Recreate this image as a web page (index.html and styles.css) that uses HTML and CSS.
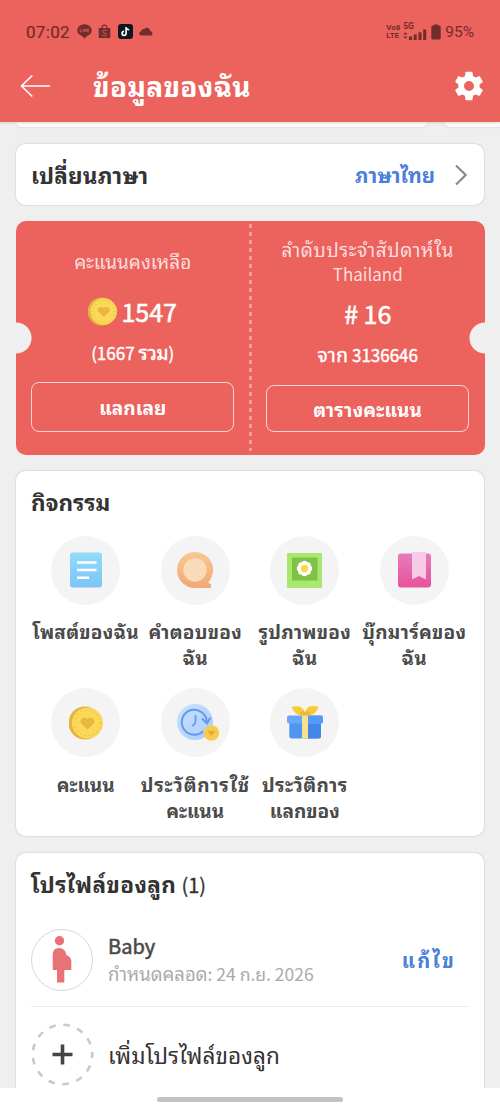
FILE: index.html
```html
<!DOCTYPE html>
<html lang="th">
<head>
<meta charset="utf-8">
<meta name="viewport" content="width=device-width">
<title>ข้อมูลของฉัน</title>
<link rel="stylesheet" href="styles.css">
</head>
<body>
<svg class="defs" width="0" height="0" aria-hidden="true">
  <defs>
    <linearGradient id="blue" x1="0" y1="0" x2="0" y2="1"><stop offset="0" stop-color="#92dbfa"/><stop offset="1" stop-color="#7cc4f6"/></linearGradient>
    <linearGradient id="orange" x1="0" y1="0" x2="0" y2="1"><stop offset="0" stop-color="#f7ca92"/><stop offset="1" stop-color="#f3a773"/></linearGradient>
    <linearGradient id="pink" x1="0" y1="0" x2="0" y2="1"><stop offset="0" stop-color="#e57cbd"/><stop offset="1" stop-color="#e8529b"/></linearGradient>
    <linearGradient id="sky" x1="0" y1="0" x2="1" y2="1"><stop offset="0" stop-color="#c9e2fd"/><stop offset="1" stop-color="#a9cdfa"/></linearGradient>
    <symbol id="coin" viewBox="0 0 34 34">
      <circle cx="16" cy="17" r="16.5" fill="#e3b440"/>
      <circle cx="18.5" cy="17" r="15.5" fill="#fbd857"/>
      <circle cx="18.5" cy="17" r="12.8" fill="none" stroke="#e6b842" stroke-width="1.1" stroke-dasharray="1.2 3.2"/>
      <path d="M18.5 23.500 L12.300 17.400 C9.500 13.500 14.800 9.800 18.500 13 C22.200 9.800 27.500 13.500 24.700 17.400Z" fill="#e9b73f"/>
    </symbol>
  </defs>
</svg>
<div class="screen">
  <header class="top">
    <div class="status">
      <span class="clock">07:02</span>
      <svg class="s-line" width="15" height="15" viewBox="0 0 15 15"><ellipse cx="7.5" cy="6.3" rx="7.2" ry="6.1" fill="#712c2c"/><path d="M4 11 L7.5 14.5 L12 10Z" fill="#712c2c"/><path d="M3.2 4.8V7.8H4.8M6 4.8V7.8M7.3 7.8V4.8L9 7.8V4.8M12 4.8H10.4V7.8H12M10.4 6.3H12" fill="none" stroke="#d65c56" stroke-width=".8"/></svg>
      <svg class="s-shop" width="13" height="15" viewBox="0 0 13 15"><path d="M.7 4H12.3V14H.7Z" fill="#712c2c"/><path d="M4 4C4 .1 9 .1 9 4" fill="none" stroke="#712c2c" stroke-width="1.1"/><path d="M8.6 6.7C6.5 5.2 4.2 6.2 4.7 7.7C5.2 9.3 8.6 8.8 8.5 10.8C8.3 12.5 5.7 12.4 4.2 11.2" fill="none" stroke="#d65c56" stroke-width="1"/></svg>
      <svg class="s-tik" width="15" height="15" viewBox="0 0 15 15"><rect width="15" height="15" rx="3" fill="#101721"/><path d="M8.1 3V9.5A2 2 0 1 1 6.2 7.4M8.1 3C8.3 4.8 9.6 5.7 11.2 5.8" fill="none" stroke="#fff" stroke-width="1.6"/></svg>
      <svg class="s-cloud" width="14" height="9" viewBox="0 0 14 9"><path d="M2.5 8.5C-.4 8.4-.3 5 2.1 4.6C2 2.3 4.5 1.4 5.5 2.2C7-.6 11 .7 11 4C13.9 4.3 14.3 8.2 12 8.5Z" fill="#712c2c"/></svg>
      <span class="volte"><span>Vo8</span><span>LTE</span></span>
      <span class="signal"><span class="g5">5G</span>
        <svg width="24" height="11" viewBox="0 0 24 11"><path d="M.4 5.500 L2.400 3.200 4.400 5.500ZM.4 7.500 L2.400 9.800 4.400 7.500Z" fill="#712c2c"/><path d="M6 7.500h3V11H6zM10.700 5.500h3V11h-3zM15.500 3.200h3V11h-3zM20.200 .6h3V11h-3z" fill="#712c2c"/></svg></span>
      <svg class="s-bat" width="10" height="16" viewBox="0 0 10 16"><path d="M3 .5H7V1.500H8.500Q9.700 1.500 9.700 3V14Q9.700 15.500 8.200 15.500H1.800Q.3 15.500 .3 14V3Q.3 1.500 1.500 1.500H3Z" fill="#712c2c"/></svg>
      <span class="pct">95%</span>
    </div>
    <div class="bar">
      <svg class="back" width="31" height="24" viewBox="0 0 31 24"><path d="M30 12H1.500M12.300 1.500L1.500 12L12.300 22.500" fill="none" stroke="#fff" stroke-width="1.600"/></svg>
      <h1>ข้อมูลของฉัน</h1>
      <svg class="gear" width="34" height="34" viewBox="0 0 24 24"><path fill="#fff" d="M19.430 12.980c.040-.320.070-.640.070-.980s-.030-.660-.070-.980l2.110-1.650c.190-.150.240-.420.120-.640l-2-3.460c-.120-.220-.390-.300-.610-.220l-2.490 1c-.520-.400-1.080-.730-1.690-.980l-.380-2.650C14.460 2.180 14.250 2 14 2h-4c-.250 0-.460.180-.490.420l-.380 2.650c-.610.250-1.170.590-1.690.980l-2.490-1c-.230-.090-.490 0-.610.220l-2 3.460c-.130.220-.070.490.120.640l2.110 1.650c-.040.320-.070.650-.070.980s.030.660.070.980l-2.110 1.650c-.190.150-.240.420-.120.640l2 3.460c.120.220.390.300.610.220l2.490-1c.520.400 1.080.730 1.690.980l.380 2.650c.030.240.240.420.490.420h4c.250 0 .460-.180.490-.420l.380-2.650c.610-.250 1.170-.590 1.690-.980l2.490 1c.230.090.490 0 .610-.220l2-3.460c.120-.220.070-.490-.120-.640l-2.110-1.650zM12 15.500c-1.930 0-3.500-1.570-3.500-3.500s1.570-3.500 3.500-3.500 3.500 1.570 3.500 3.500-1.570 3.500-3.500 3.500z"/></svg>
    </div>
  </header>

  <main>
    <div class="peek"><i></i><i></i></div>

    <section class="card lang">
      <span class="lang-label">เปลี่ยนภาษา</span>
      <span class="lang-value">ภาษาไทย</span>
      <svg width="12" height="22" viewBox="0 0 12 22"><path d="M1 1.500L10.700 11L1 20.500" fill="none" stroke="#84898c" stroke-width="2.100"/></svg>
    </section>

    <section class="ticket">
      <div class="half left">
        <p class="cap one">คะแนนคงเหลือ</p>
        <p class="big"><svg width="29" height="29"><use href="#coin"/></svg><span>1547</span></p>
        <p class="sub">(1667 <span class="t-sum">รวม</span>)</p>
        <a class="btn b1"><span>แลกเลย</span></a>
      </div>
      <div class="half right">
        <p class="cap two"><span class="t-rank">ลำดับประจำสัปดาห์ใน</span><br>Thailand</p>
        <p class="big"><span># 16</span></p>
        <p class="sub"><span class="t-from">จาก</span> 3136646</p>
        <a class="btn b2"><span>ตารางคะแนน</span></a>
      </div>
    </section>

    <section class="card acts">
      <h2>กิจกรรม</h2>
      <div class="grid">
        <div class="act"><div class="disc"><svg width="32" height="36" viewBox="0 0 32 36"><rect y=".5" width="32" height="35" rx="3" fill="url(#blue)"/><path d="M7 10.500H26.500M7 18H26.500M7 25.700H19" stroke="#fff" stroke-width="2.400"/></svg></div>
          <p><span class="a1">โพสต์ของฉัน</span></p></div>
        <div class="act"><div class="disc"><svg width="36" height="36" viewBox="0 0 36 36"><path d="M18 0A18 18 0 0 1 31.500 30Q31 31.500 34 32V36H18A18 18 0 0 1 18 0Z" fill="url(#orange)"/><circle cx="18" cy="18" r="11.700" fill="#fadbb9"/></svg></div>
          <p><span class="a2">คำตอบของ</span><br><span class="ac">ฉัน</span></p></div>
        <div class="act"><div class="disc"><svg width="35" height="35" viewBox="0 0 35 35"><rect width="35" height="35" rx="1" fill="#a8e770"/><rect x="5" y="4.500" width="25.500" height="23" fill="#80c246"/><g fill="#fff"><circle cx="17.500" cy="10.800" r="3"/><circle cx="20.800" cy="12.200" r="3"/><circle cx="22.200" cy="15.500" r="3"/><circle cx="20.800" cy="18.800" r="3"/><circle cx="17.500" cy="20.200" r="3"/><circle cx="14.200" cy="18.800" r="3"/><circle cx="12.800" cy="15.500" r="3"/><circle cx="14.200" cy="12.200" r="3"/></g><circle cx="17.500" cy="15.500" r="3.700" fill="#f3db4b"/></svg></div>
          <p><span class="a3">รูปภาพของ</span><br><span class="ac">ฉัน</span></p></div>
        <div class="act"><div class="disc"><svg width="33" height="36" viewBox="0 0 33 36"><rect y="1.500" width="33" height="34" rx="3" fill="url(#pink)"/><path d="M14 0H28V27.500L21 24L14 27.500Z" fill="#f8cae5"/></svg></div>
          <p><span class="a4">บุ๊กมาร์คของ</span><br><span class="ac">ฉัน</span></p></div>
        <div class="act"><div class="disc"><svg width="34" height="34"><use href="#coin"/></svg></div>
          <p><span class="a5">คะแนน</span></p></div>
        <div class="act"><div class="disc hist"><svg width="43" height="37" viewBox="0 0 43 37"><circle cx="18" cy="18" r="18" fill="url(#sky)"/><path d="M26 27.200A12.500 12.500 0 1 1 29.800 18.500" fill="none" stroke="#6798ec" stroke-width="2"/><path d="M25 14.500L30 19.500L33.500 13.500" fill="none" stroke="#6798ec" stroke-width="2"/><path d="M18.500 11V17Q18.500 20.500 15 22" fill="none" stroke="#6798ec" stroke-width="1.700"/><circle cx="34.500" cy="29" r="7.700" fill="#f8cb50"/><path d="M34.500 32L31.600 29C30.200 26.800 33 25.600 34.500 27.200C36 25.600 38.800 26.800 37.400 29Z" fill="#e6ad35"/></svg></div>
          <p><span class="a6">ประวัติการใช้</span><br><span class="a5">คะแนน</span></p></div>
        <div class="act"><div class="disc"><svg width="36" height="33" viewBox="0 0 36 33"><path d="M17.500 9C14 10 8 9.500 4.500 1C10-1 16 .5 18 6C20-.5 26-1 31.700 1C28.500 9.500 22 10 18.500 9Z" fill="#facb35"/><path d="M12 8C14 4 17 5 18 7C19 5 22 4 24 8L18 10Z" fill="#efb62f"/><rect x="2.300" y="13" width="31.700" height="19.500" rx="2.500" fill="#5195f2"/><path d="M21 17H34V30Q34 32.500 31.500 32.500H21Z" fill="#4487e9"/><rect x="0" y="9.500" width="36" height="8" rx="2" fill="#68a7fb"/><path d="M21 9.500H34Q36 9.500 36 11.500V15.500Q36 17.500 34 17.500H21Z" fill="#5599f7"/><path d="M15 9.500H21V32.500H15Z" fill="#f8e18a"/></svg></div>
          <p><span class="a7">ประวัติการ</span><br><span class="a8">แลกของ</span></p></div>
      </div>
    </section>

    <section class="card kids">
      <h2><span class="k-title">โปรไฟล์ของลูก</span> <small>(1)</small></h2>
      <div class="kid">
        <div class="avatar"><svg width="20" height="47" viewBox="0 0 20 47"><circle cx="7.500" cy="4.800" r="4.700" fill="#e97276"/><path d="M.7 34V19Q.7 12 7 12Q13.500 12 14.300 19Q19.300 20.500 19.300 26V34H12.300V46.500H5V34Z" fill="#e97276"/></svg></div>
        <div class="who"><b>Baby</b><span class="due"><span class="t-due">กำหนดคลอด</span>: 24 <span class="t-mon">ก.ย.</span> 2026</span></div>
        <a class="edit">แก้ไข</a>
      </div>
      <div class="kid add">
        <svg class="dash" width="63" height="63" viewBox="0 0 63 63"><circle cx="31.500" cy="31.500" r="29.700" fill="none" stroke="#c9c9c9" stroke-width="2.600" stroke-dasharray="6.600 7.755" stroke-dashoffset="3"/><path d="M31.500 21.500V41.500M21.500 31.500H41.500" stroke="#444" stroke-width="3.600"/></svg>
        <span class="addt">เพิ่มโปรไฟล์ของลูก</span>
      </div>
    </section>
  </main>
  <footer><i></i></footer>
</div>
</body>
</html>
```
FILE: styles.css
```css
* { box-sizing: border-box; }
body { margin: 0; }
h1, h2, p { margin: 0; }
svg { display: block; flex: none; }
.defs { position: absolute; }
.screen {
  width: 500px; height: 1111px; overflow: hidden;
  display: flex; flex-direction: column;
  background: #efefef; color: #333;
  font-family: "Noto Sans CJK SC", "Noto Sans Thai Looped", "Noto Looped Thai", "Droid Sans Thai", Loma, Laksaman, Umpush, Waree, Garuda, "Noto Serif Thai Looped", "Noto Sans Thai", "Noto Sans", sans-serif;
  white-space: nowrap;
}
.top { height: 122px; flex: none; background: #ec625d; box-shadow: 0 1px 2px rgba(0,0,0,.12); z-index: 1; }
.status {
  height: 63px; padding: 0 26px; display: flex; align-items: center;
  color: #712c2c; font-family: Roboto, sans-serif;
}
.clock { font-size: 17px; line-height: 20px; width: 44px; letter-spacing: .3px; -webkit-text-stroke: .2px; }
.s-line { margin-left: 7px; }
.s-shop { margin-left: 6px; }
.s-tik { margin-left: 7px; }
.s-cloud { margin-left: 6px; margin-right: auto; }
.volte { display: flex; flex-direction: column; font-size: 8px; font-weight: 700; line-height: 8px; width: 17px; }
.signal { display: flex; flex-direction: column; width: 24px; font-size: 8.500px; font-weight: 700; line-height: 6px; }
.s-bat { margin-left: 4px; }
.pct { font-size: 15.500px; line-height: 18px; margin-left: 4px; }
.bar { height: 46px; display: flex; align-items: center; padding: 0 14px 0 20px; }
.bar h1 { margin: -3px 0 0 42px; font-size: 28px; line-height: 36px; height: 36px; color: #fff; letter-spacing: .3px; }
.gear { margin-left: auto; }

main { flex: 1; min-height: 0; overflow: hidden; display: flex; flex-direction: column; padding: 0 16px; }
.peek { height: 5px; flex: none; display: flex; gap: 17px; margin-right: -32px; }
.peek i { height: 5px; background: #fafafa; border-radius: 0 0 10px 10px; flex: none; width: 411px; box-shadow: 0 0 1px 1px #e2e2e5; }
.card { background: #fff; border-radius: 10px; box-shadow: 0 0 1px .5px #dedee3; flex: none; }
.lang { height: 61px; margin-top: 17px; padding: 0 17px 0 15px; display: flex; align-items: center; }
.lang-label { font-size: 22.500px; font-weight: 700; line-height: 28px; height: 30px; letter-spacing: .2px; }
.lang-value { margin-left: auto; margin-right: 20px; font-size: 20.500px; font-weight: 700; line-height: 28px; height: 30px; color: #4a80da; }

.ticket {
  margin: 16px -.5px 0; height: 234px; flex: none; border-radius: 10px; color: #fff; display: flex;
  background:
    radial-gradient(circle at 0 117px, #efefef 15px, transparent 16px),
    radial-gradient(circle at 100% 117px, #efefef 15px, transparent 16px),
    #ec625d;
}
.half { width: 234.500px; display: flex; flex-direction: column; align-items: center; text-align: center; padding: 0 15.500px; }
.right { background: repeating-linear-gradient(#f49d99 0 4px, transparent 4px 8px) 0 3px / 3px 227px no-repeat; margin-left: -1px; padding: 0 15px 0 17px; width: 235.500px; }
.cap { font-size: 17px; line-height: 24px; color: #fbdedd; }
.one { font-size: 19px; height: 24px; margin-top: 28px; }
.two { height: 48px; margin-top: 17px; }
.t-rank { font-family: "Noto Sans", "Noto Sans Thai Looped", Loma, Laksaman, Umpush, Waree, Garuda, sans-serif; font-size: 19px; line-height: 20px; letter-spacing: .6px; }
.big { display: flex; align-items: center; gap: 4px; height: 36px; font-size: 25px; line-height: 36px; -webkit-text-stroke: .6px; }
.left .big { margin-top: 20px; }
.right .big { margin-top: 9px; }
.sub { font-size: 17px; line-height: 24px; height: 24px; -webkit-text-stroke: .4px; }
.t-sum { font-size: 19px; line-height: 20px; }
.t-from { font-size: 19px; line-height: 20px; letter-spacing: .3px; }
.left .sub { margin-top: 12px; }
.right .sub { margin-top: 12px; }
.btn { width: 203px; border: 1.500px solid #fbd6d4; border-radius: 8px; font-size: 19px; font-weight: 700; display: flex; align-items: center; justify-content: center; }
.btn span { height: 28px; line-height: 28px; }
.b1 { height: 50px; margin-top: 17px; }
.b2 { height: 47px; margin-top: 18px; letter-spacing: .2px; }

.acts { height: 365px; margin-top: 16px; }
h2 { font-size: 22.500px; font-weight: 700; line-height: 30px; height: 30px; margin: 15px 0 0 15px; }
.grid { display: grid; grid-template-columns: repeat(4, 109.500px); grid-template-rows: 152.500px 152px; padding: 19.500px 15px 0; }
.grid { justify-content: center; }
.act { display: flex; flex-direction: column; align-items: center; text-align: center; }
.disc { width: 69px; height: 69px; border-radius: 50%; background: #f4f4f4; display: flex; align-items: center; justify-content: center; flex: none; }
.hist { padding-left: 7px; }
.act p {
  margin-top: 14.500px; font-size: 19px; font-weight: 700; line-height: 26px; color: #4a4a4a; letter-spacing: .25px;
  font-family: "Noto Sans", "Noto Sans Thai Looped", Loma, Laksaman, Umpush, Waree, Garuda, sans-serif;
}
.act .a5 { letter-spacing: 0; }
.act .a6 { letter-spacing: .8px; }
.act .a7 { letter-spacing: .4px; }
.act .a8 { letter-spacing: 0; }

.kids { height: 260px; margin-top: 17px; }
.k-title { letter-spacing: .4px; }
small { font-size: 20px; font-weight: 400; letter-spacing: 0; -webkit-text-stroke: .3px; }
.kid { margin: 0 15px; height: 94px; display: flex; align-items: center; border-bottom: 1px solid #e9e9e9; margin-top: 15px; }
.avatar { width: 62px; height: 62px; border: 1px solid #d7d7d7; border-radius: 50%; display: flex; align-items: center; justify-content: center; flex: none; }
.who { margin-left: 15px; display: flex; flex-direction: column; color: #4a4a4a; }
.who b { font-size: 20px; font-weight: 400; line-height: 28px; height: 28px; -webkit-text-stroke: .6px; }
.due { font-size: 17.500px; line-height: 28px; height: 28px; color: #aaa; }
.t-due { font-size: 18.500px; line-height: 20px; }
.edit { margin-left: auto; margin-right: 13px; font-size: 20px; font-weight: 700; color: #4a80da; line-height: 28px; height: 28px; letter-spacing: 2.200px; }
.add { border: 0; margin-top: 0; }
.addt { margin-left: 14px; font-size: 22.500px; line-height: 30px; height: 30px; letter-spacing: .1px; }

footer { height: 23px; flex: none; background: #fff; display: flex; justify-content: center; padding-top: 9px; }
footer i { width: 186px; height: 5px; border-radius: 3px; background: #c2c2c2; }
```
